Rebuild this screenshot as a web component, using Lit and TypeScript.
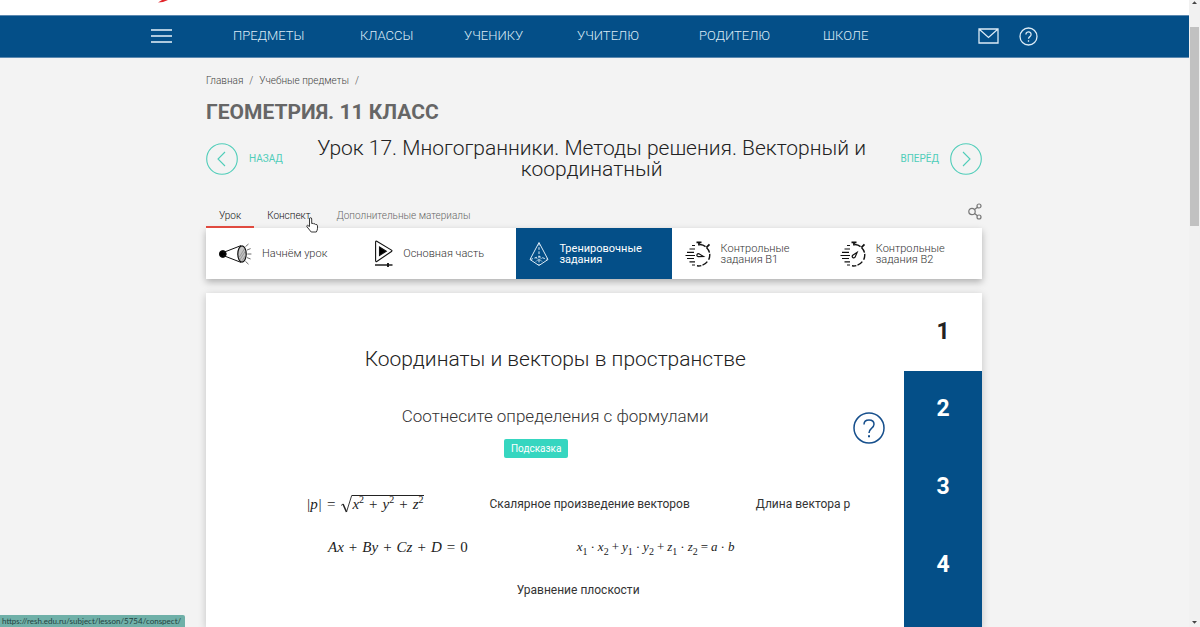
import { LitElement, html, svg, css } from "lit";
import { customElement, property } from "lit/decorators.js";

const icons = {
  megaphone: svg`<svg viewBox="0 0 33 24" width="33" height="24" fill="none" stroke="#111" stroke-width="1">
    <circle cx="3.8" cy="12" r="3.4" fill="#000"/>
    <path d="M4 10.6 22 3.6M4 13.4 22 20.4"/>
    <ellipse cx="23" cy="12" rx="4.2" ry="8.2" fill="#c4c4c4" stroke-width="1.2"/>
    <path d="m20.4 15 5-8M20.8 18l6-9.6M23 18.800l3.800-5.800" stroke="#777" stroke-width=".6"/>
    <path d="m26.500 4.600 3-2.600M28 8l3.600-1.400M28.400 12h4M28 15.600l3.600 1.400M26.500 19.400l3 2.800" stroke="#444" stroke-width=".8"/>
  </svg>`,
  play: svg`<svg viewBox="0 0 19 27" width="19" height="27" fill="none" stroke="#111" stroke-width="1.100">
    <path d="M1.600 2.200Q1.600.8 2.800 1.300L17.500 10.100q1 .7 0 1.400L2.800 21.400q-1.200.6-1.200-.8z"/>
    <path d="M5.500 7v8.400l6.800-4.200z" fill="#000"/>
    <path d="M1 25h17.500" stroke-width="1.400"/><path d="M14 23v4" stroke-width="1.800"/>
  </svg>`,
  pyramid: svg`<svg viewBox="0 0 20 26" width="20" height="26" fill="none" stroke="#dceaf5" stroke-width="1">
    <path d="M10 1.500 1 18.500 10 24.500 19 18.500z"/>
    <path d="M10 2v22M1.500 18.500 10 15.500l8.500 3" stroke-dasharray="2.600 1.600"/>
    <path d="m6.500 20.500 7-3.600M13.500 20.500l-7-3.600" stroke-width=".5"/>
  </svg>`,
};

const stopwatch = (hand: string) => svg`<svg viewBox="0 0 26 26" width="26" height="26" fill="none" stroke="#111">
  <path d="M7 4.500h3M4.500 8H10M2 11.300h7M.5 14.500h9.500M2 17.500h7M4.500 20.800H10M7 24h3" stroke-width="1.200"/>
  <path d="M15 3.500a10.600 10.600 0 0 1 8.600 15.400M22.300 20.600A10.800 10.800 0 0 1 12 24.800" stroke-width="1.400" stroke-dasharray="6 1.200"/>
  <path d="M11.500 1.300h5M14 1.500v3" stroke-width="1.800"/><path d="m21.500 6.300 3-3" stroke-width="1.700"/>
  <g transform="rotate(${hand} 14.500 14.500)"><path d="M11.800 14.500q0-1.500 1.800-1.500l5 1.500-5 1.500q-1.800 0-1.800-1.500z" stroke-width="1.200"/></g>
</svg>`;

const chevron = (d: string) => svg`<svg viewBox="0 0 32 32" width="32" height="32" fill="none" stroke="#4fcdb9" stroke-width="1.100"><circle cx="16" cy="16" r="15.300"/><path d=${d}/></svg>`;

@customElement("site-header")
class SiteHeader extends LitElement {
  static styles = css`
    :host { display: block; background: #044f88; border-top: 1px solid #5c89b0; border-bottom: 1px solid #5c89b0; box-sizing: border-box; }
    .bar { width: calc(100% - 302px); margin: 0 auto; height: 40px; padding-bottom: 1px; display: flex; align-items: center; }
    .menu, .tool { background: none; border: 0; padding: 0; display: block; cursor: pointer; }
    .menu { width: 82px; text-align: left; }
    svg { display: block; }
    .links { display: grid; grid-template-columns: 127px 104px 113px 122px 124px auto; flex: 1; }
    a { color: #dcebf6; text-decoration: none; font: 300 13px/20px Roboto, sans-serif; }
    .tools { display: flex; align-items: center; gap: 20px; }
  `;
  render() {
    return html`<header class="bar">
      <button class="menu" aria-label="Меню"><svg viewBox="0 0 21 16" width="21" height="16" stroke="#e8f3fa" stroke-width="1.500"><path d="M0 2h21M0 8h21M0 14h21"/></svg></button>
      <nav class="links">
        ${["ПРЕДМЕТЫ", "КЛАССЫ", "УЧЕНИКУ", "УЧИТЕЛЮ", "РОДИТЕЛЮ", "ШКОЛЕ"].map((t) => html`<a href="#">${t}</a>`)}
      </nav>
      <div class="tools">
        <button class="tool" aria-label="Сообщения"><svg viewBox="0 0 21 16" width="21" height="16" fill="none" stroke="#dcebf6" stroke-width="1.300"><path d="M1 1h19v14H1zM1 1l9.500 8.500L20 1"/></svg></button>
        <button class="tool" aria-label="Помощь"><svg viewBox="0 0 19 19" width="19" height="19" fill="none" stroke="#dcebf6" stroke-width="1.300"><circle cx="9.500" cy="9.500" r="8.500"/><path d="M6.900 7.400a2.600 2.500 0 1 1 4.200 2q-1.600 1.100-1.600 2.400M9.500 13.200v1.500"/></svg></button>
      </div>
    </header>`;
  }
}

@customElement("step-bar")
class StepBar extends LitElement {
  static styles = css`
    :host { display: grid; grid-template-columns: repeat(5, 1fr); background: #fff; box-shadow: 0 3px 7px rgba(0, 0, 0, .28); }
    .step { display: flex; align-items: center; gap: 10px; height: 51px; padding-left: 13px; box-sizing: border-box; color: #333; text-decoration: none; font: 300 11px/11px Roboto, sans-serif; }
    .active { background: #044f88; color: #fff; font-weight: 400; }
    svg { display: block; flex: none; }
  `;
  render() {
    const steps = [
      { icon: icons.megaphone, label: ["Начнём урок"] },
      { icon: icons.play, label: ["Основная часть"] },
      { icon: icons.pyramid, label: ["Тренировочные", "задания"], active: true },
      { icon: stopwatch("15"), label: ["Контрольные", "задания В1"] },
      { icon: stopwatch("-50"), label: ["Контрольные", "задания В2"] },
    ];
    return html`${steps.map((s) => html`<a href="#" class="step ${s.active ? "active" : ""}">${s.icon}<span>${s.label.map((l, i) => html`${i ? html`<br>` : ""}${l}`)}</span></a>`)}`;
  }
}

@customElement("task-card")
class TaskCard extends LitElement {
  @property({ type: Number }) current = 1;
  static styles = css`
    :host { display: flex; background: #fff; box-shadow: 0 2px 8px rgba(0, 0, 0, .2); font-family: Roboto, sans-serif; color: #333; }
    .body { flex: 1; padding: 52px 19px 0; }
    h2 { margin: 0; text-align: center; font-weight: 300; font-size: 21px; line-height: 28px; color: #222; }
    .ask { display: grid; grid-template-columns: 1fr 32px; column-gap: 6px; margin-top: 25px; }
    h3 { grid-area: 1 / 1 / 2 / 3; margin: 0; text-align: center; font-weight: 300; font-size: 17px; line-height: 36px; padding-bottom: 5px; }
    .hint { grid-area: 2 / 1; justify-self: center; border: 0; border-radius: 2px; background: #36d6c0; color: #fff; font: 400 10px/19px Roboto, sans-serif; height: 19px; padding: 0 7px; }
    .help { grid-area: 1 / 2 / 3 / 3; align-self: center; border: 0; padding: 0; background: none; }
    svg { display: block; }
    .row { display: flex; align-items: center; justify-content: center; gap: 66px; padding-left: 46px; height: 43px; font-size: 12px; }
    .first { margin-top: 24px; }
    .second { gap: 109px; padding: 0 48px 0 0; }
    .pages { width: 10%; background: #044f88; }
    .page { display: flex; width: 100%; aspect-ratio: 1; align-items: center; justify-content: center; border: 0; padding: 0; background: none; color: #fff; font: 700 23px/28px Roboto, sans-serif; }
    .current { background: #fff; color: #222; }
    .math { display: flex; align-items: center; gap: 5px; font: italic 15px/18px "Liberation Serif", serif; color: #222; white-space: nowrap; }
    .small { font-size: 13px; gap: 3px; }
    .up { font-style: normal; }
    sup, sub { font-style: normal; font-size: 10px; line-height: 0; }
    .root { display: flex; align-items: stretch; }
    .under { display: flex; gap: 5px; border-top: 1px solid #222; line-height: 17px; }
  `;
  render() {
    const op = (t: string) => html`<span class="up">${t}</span>`;
    return html`
      <div class="body">
        <h2>Координаты и векторы в пространстве</h2>
        <div class="ask">
          <h3>Соотнесите определения с формулами</h3>
          <button class="hint">Подсказка</button>
          <button class="help" aria-label="Справка"><svg viewBox="0 0 32 32" width="32" height="32" fill="none" stroke="#164f8c" stroke-width="1.500"><circle cx="16" cy="16" r="15"/><path d="M11 12.500q0-4.500 5-4.500t5 4.300q0 2-2.500 4T16 21"/><path d="M16 23.200v2" stroke-width="2"/></svg></button>
        </div>
        <div class="row first">
          <span class="math"><span>|p|</span>${op("=")}<span class="root"><svg viewBox="0 0 12 18" width="12" height="18" fill="none" stroke="#222"><path d="m1 10.500 2-1.500" stroke-width=".8"/><path d="m3 9 3.500 8" stroke-width="1.500"/><path d="M6.500 17 11.700.5h.3" stroke-width=".9"/></svg><span class="under"><span>x<sup>2</sup></span>${op("+")}<span>y<sup>2</sup></span>${op("+")}<span>z<sup>2</sup></span></span></span></span>
          <span>Скалярное произведение векторов</span>
          <span>Длина вектора p</span>
        </div>
        <div class="row second">
          <span class="math"><span>Ax</span>${op("+")}<span>By</span>${op("+")}<span>Cz</span>${op("+")}<span>D</span>${op("=")}${op("0")}</span>
          <span class="math small"><span>x<sub>1</sub></span>${op("·")}<span>x<sub>2</sub></span>${op("+")}<span>y<sub>1</sub></span>${op("·")}<span>y<sub>2</sub></span>${op("+")}<span>z<sub>1</sub></span>${op("·")}<span>z<sub>2</sub></span>${op("=")}<span>a</span>${op("·")}<span>b</span></span>
        </div>
        <div class="row"><span>Уравнение плоскости</span></div>
      </div>
      <nav class="pages">${[1, 2, 3, 4].map((n) => html`<button class="page ${n === this.current ? "current" : ""}">${n}</button>`)}</nav>`;
  }
}

@customElement("app-root")
class AppRoot extends LitElement {
  static styles = css`
    :host { display: flex; height: 100vh; overflow: hidden; position: relative; background: #f3f3f3; font-family: Roboto, sans-serif; }
    svg { display: block; }
    .page { flex: 1; display: flex; flex-direction: column; min-width: 0; }
    .logo { height: 15px; flex: none; background: #fff; padding-left: 157px; }
    .content { flex: 1; display: flex; flex-direction: column; margin: 0 207px 0 206px; padding-top: 15px; }
    .crumbs { display: flex; gap: 6px; font-weight: 300; font-size: 10px; line-height: 16px; color: #444; }
    a { color: inherit; text-decoration: none; }
    h1 { margin: 11px 0 0; font-weight: 700; font-size: 21px; line-height: 24px; color: #666; }
    .lesson { display: flex; justify-content: space-between; align-items: center; margin-top: 14px; height: 42px; }
    .lesson h2 { margin: 0; flex: 1; padding: 0 30px; text-align: center; font-weight: 300; font-size: 21px; line-height: 21px; color: #222; }
    .turn { display: flex; align-items: center; gap: 11px; color: #4fcdb9; font-size: 10px; line-height: 16px; }
    .tabs { display: flex; align-items: flex-end; margin-top: 20px; height: 28px; font-weight: 300; font-size: 10px; line-height: 16px; }
    .tab { position: relative; padding: 0 13px 2px; border-bottom: 2px solid transparent; color: #111; }
    .on { border-color: #e04a3f; }
    .dim { color: #666; }
    .cursor { position: absolute; right: 6px; top: 9px; }
    .share { margin-left: auto; align-self: flex-start; margin-top: 3px; border: 0; padding: 0; background: none; }
    task-card { flex: 1; margin-top: 14px; }
    .scroll { width: 11px; background: #f1f1f1; display: flex; flex-direction: column; align-items: center; }
    .thumb { width: 9px; height: 199px; margin: 22px 0 auto; background: #c1c1c1; }
    .down { margin-bottom: 2px; }
    .status { position: absolute; left: 0; bottom: 0; background: #6fb0a8; color: #23423f; border-radius: 0 2px 0 0; padding: 0 4px 0 2px; font: 400 8px/12px Lato, sans-serif; }
  `;
  render() {
    return html`
      <div class="page">
        <div class="logo"><svg viewBox="0 0 14 3" width="14" height="3"><path d="M1 2.500Q6 2.500 11 0H5z" fill="#e2262b"/></svg></div>
        <site-header></site-header>
        <main class="content">
          <nav class="crumbs"><a href="#">Главная</a><span>/</span><a href="#">Учебные предметы</a><span>/</span></nav>
          <h1>ГЕОМЕТРИЯ. 11 КЛАСС</h1>
          <div class="lesson">
            <a class="turn" href="#">${chevron("m19 9-7 7 7 7")}<span>НАЗАД</span></a>
            <h2>Урок 17. Многогранники. Методы решения. Векторный и координатный</h2>
            <a class="turn" href="#"><span>ВПЕРЁД</span>${chevron("m13 9 7 7-7 7")}</a>
          </div>
          <nav class="tabs">
            <a class="tab on" href="#">Урок</a>
            <a class="tab" href="#">Конспект<svg class="cursor" viewBox="0 0 12 16" width="12" height="16"><path d="M3.500 9.500V2q0-1.300 1.100-1.300T5.700 2v4.500q1.800-.6 2 .4 1.700-.5 1.900.6 1.800-.3 1.900 1.200v2.500q0 2-1.200 3.800H5.200L1 9.800q-.6-1.300.5-1.500z" fill="#fff" stroke="#222" stroke-width=".9"/></svg></a>
            <a class="tab dim" href="#">Дополнительные материалы</a>
            <button class="share" aria-label="Поделиться"><svg viewBox="0 0 14 17" width="14" height="17" fill="none" stroke="#777" stroke-width="1.200"><circle cx="4" cy="8.500" r="3.200"/><circle cx="11" cy="3" r="2"/><circle cx="11" cy="14" r="2"/><path d="m6.500 6.500 3-2.300M6.500 10.500l3 2.300"/></svg></button>
          </nav>
          <step-bar></step-bar>
          <task-card></task-card>
        </main>
      </div>
      <div class="scroll"><svg viewBox="0 0 5 5" width="5" height="5"><path d="M0 4 2.500 1.200 5 4z" fill="#444"/></svg><div class="thumb"></div><svg class="down" viewBox="0 0 5 5" width="5" height="5"><path d="M0 1 2.500 3.800 5 1z" fill="#444"/></svg></div>
      <div class="status">https://resh.edu.ru/subject/lesson/5754/conspect/</div>`;
  }
}
